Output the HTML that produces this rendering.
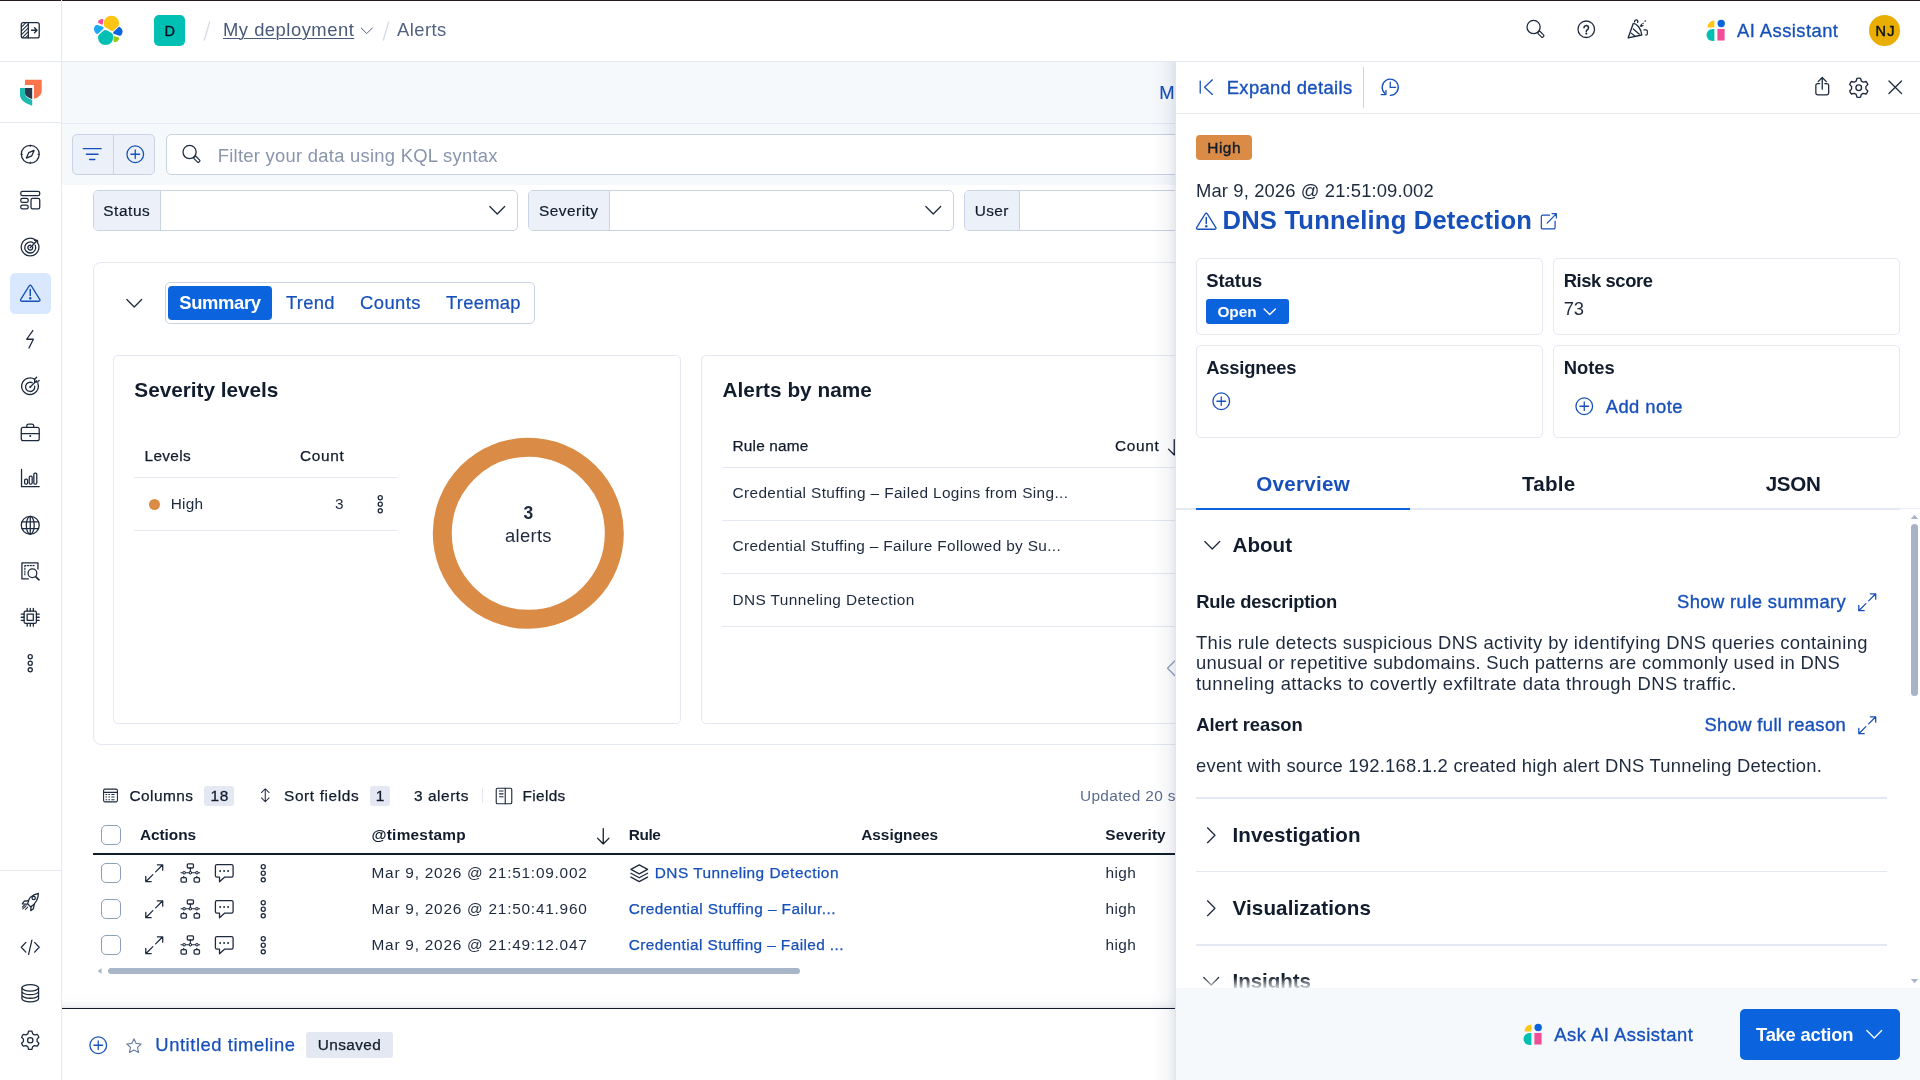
<!DOCTYPE html><html lang="en"><head><meta charset="utf-8"><title>Alerts - Elastic Security</title>
<style>
html,body{margin:0;padding:0}
body{width:1920px;height:1080px;overflow:hidden;position:relative;background:#fff;font-family:"Liberation Sans",sans-serif;-webkit-font-smoothing:antialiased}
#w{position:absolute;left:0;top:0;width:1920px;height:1080px;will-change:transform}
.b{position:absolute;box-sizing:border-box}
.t{position:absolute;white-space:nowrap;display:block}
.i{position:absolute;overflow:visible}
</style></head>
<body>
<div id="w">
<div class="b" style="left:62px;top:62px;width:1858px;height:123px;background:#f6f9fc;"></div>
<div class="b" style="left:62px;top:123px;width:1858px;height:1px;background:#e3e8f2;"></div>
<div class="b" style="left:0px;top:0px;width:1920px;height:61px;background:#fff;"></div>
<div class="b" style="left:0px;top:61px;width:1920px;height:1px;background:#e3e8f2;"></div>
<div class="b" style="left:0px;top:0px;width:1920px;height:1px;background:#271d1e;"></div>
<div class="b" style="left:0px;top:62px;width:61px;height:1018px;background:#fff;"></div>
<div class="b" style="left:61px;top:0px;width:1px;height:1080px;background:#e3e8f2;"></div>
<div class="b" style="left:0px;top:122px;width:61px;height:1px;background:#e3e8f2;"></div>
<div class="b" style="left:0px;top:870px;width:61px;height:1px;background:#e3e8f2;"></div>
<svg class="i" style="left:19.75px;top:19.75px;color:#1d2a3e;" width="20.5" height="20.5" viewBox="0 0 16 16" fill="none" stroke="currentColor" stroke-width="1" stroke-linecap="round" stroke-linejoin="round"><rect x="1" y="2" width="14" height="12" rx="1.5"></rect><path d="M6.5 2v12"></path><path d="M9 8h4M11.3 6l2 2-2 2"></path><path d="M1.2 5.5 4.6 2.1M1.2 8.5 6.3 3.4M1.2 11.5 6.3 6.4M1.8 13.8 6.3 9.3M4.3 13.9 6.3 11.9" stroke-width=".8"></path></svg>
<svg class="i" style="left:18px;top:78px" width="26" height="30" viewBox="18 78 26 30"><path fill="#fa744e" d="M25 79.800H41.700V90.500C41.700 95 38.500 97.400 33.900 99V85H25z"></path><path fill="#1dbab0" d="M20 88H25.200V93.500C25.200 96.500 28 98.600 32.200 99.900V105.800C25.500 103.300 20 100.200 20 95z"></path><path fill="#2b394f" d="M25 88H32.200V99.200C28 97.600 25 95.600 25 93z"></path></svg>
<div class="b" style="left:10px;top:273px;width:41px;height:41px;background:#d9e8ff;border-radius:5.5px;"></div>
<svg class="i" style="left:20.05px;top:143.75px;color:#1d2a3e;" width="20.5" height="20.5" viewBox="0 0 16 16" fill="none" stroke="currentColor" stroke-width="1" stroke-linecap="round" stroke-linejoin="round"><circle cx="8" cy="8" r="7"></circle><path d="M11 5 9.2 9.2 5 11l1.8-4.2z"></path><path d="M8 1v1M8 14v1M1 8h1M14 8h1" stroke-width=".8"></path></svg>
<svg class="i" style="left:20.05px;top:189.75px;color:#1d2a3e;" width="20.5" height="20.5" viewBox="0 0 16 16" fill="none" stroke="currentColor" stroke-width="1" stroke-linecap="round" stroke-linejoin="round"><rect x=".6" y="1" width="14.800" height="3.400" rx="1.300"></rect><rect x=".6" y="6.600" width="5.800" height="3" rx="1.300"></rect><rect x=".6" y="11.800" width="5.800" height="3" rx="1.300"></rect><rect x="8.600" y="6.600" width="6.800" height="8.200" rx="1.300"></rect></svg>
<svg class="i" style="left:20.05px;top:236.75px;color:#1d2a3e;" width="20.5" height="20.5" viewBox="0 0 16 16" fill="none" stroke="currentColor" stroke-width="1" stroke-linecap="round" stroke-linejoin="round"><path d="M12.300 2.600A6.900 6.900 0 1 0 14.300 5.400"></path><path d="M10.500 4.700A4.300 4.300 0 1 0 11.900 6.400"></path><path d="M8.600 6.500A1.900 1.900 0 1 0 9.800 7.600"></path><path d="M8 8.300l5.400-5.600M11.400 2.500l2.200.1.100 2.200" stroke-width="1.100"></path></svg>
<svg class="i" style="left:20.05px;top:283.15px;color:#1750ba;" width="20.5" height="20.5" viewBox="0 0 16 16" fill="none" stroke="currentColor" stroke-width="1" stroke-linecap="round" stroke-linejoin="round"><path d="M8.850 2.200 15.500 13c.35.600-.05 1.250-.75 1.250H1.250c-.7 0-1.100-.65-.75-1.250L7.150 2.200c.35-.6 1.350-.6 1.700 0z"></path><path d="M8 5v4.700" stroke-width="1.150"></path><circle cx="8" cy="11.900" r=".95" fill="currentColor" stroke="none"></circle></svg>
<svg class="i" style="left:20.05px;top:328.75px;color:#1d2a3e;" width="20.5" height="20.5" viewBox="0 0 16 16" fill="none" stroke="currentColor" stroke-width="1" stroke-linecap="round" stroke-linejoin="round"><path d="M10 1.2 5.2 8h5.2L7 14.8"></path></svg>
<svg class="i" style="left:20.05px;top:375.75px;color:#1d2a3e;" width="20.5" height="20.5" viewBox="0 0 16 16" fill="none" stroke="currentColor" stroke-width="1" stroke-linecap="round" stroke-linejoin="round"><path d="M11.5 2.6A6.5 6.5 0 1 0 14 6"></path><path d="M9.6 5.3A3.6 3.6 0 1 0 11.5 8"></path><circle cx="8" cy="8.6" r=".8" fill="currentColor" stroke="none"></circle><path d="M8 8.6l5-5M11.4 2.2v2.6H14M13 1l-1.6 1.6M15 3.4l-1.4 1.4" stroke-width="1"></path></svg>
<svg class="i" style="left:20.05px;top:421.75px;color:#1d2a3e;" width="20.5" height="20.5" viewBox="0 0 16 16" fill="none" stroke="currentColor" stroke-width="1" stroke-linecap="round" stroke-linejoin="round"><rect x="1" y="4.2" width="14" height="10.3" rx="1.5"></rect><path d="M5.3 4.2V3c0-.8.6-1.4 1.4-1.4h2.6c.8 0 1.4.6 1.4 1.4v1.2M1 9h14"></path><circle cx="8" cy="11" r=".8" fill="currentColor" stroke="none"></circle></svg>
<svg class="i" style="left:20.05px;top:467.75px;color:#1d2a3e;" width="20.5" height="20.5" viewBox="0 0 16 16" fill="none" stroke="currentColor" stroke-width="1" stroke-linecap="round" stroke-linejoin="round"><path d="M1.2 1v13.6H15"></path><rect x="3.6" y="8.6" width="2.3" height="4" rx=".9"></rect><rect x="7.2" y="6.4" width="2.3" height="6.2" rx=".9"></rect><rect x="10.8" y="4" width="2.3" height="8.6" rx=".9"></rect></svg>
<svg class="i" style="left:20.05px;top:514.75px;color:#1d2a3e;" width="20.5" height="20.5" viewBox="0 0 16 16" fill="none" stroke="currentColor" stroke-width="1" stroke-linecap="round" stroke-linejoin="round"><circle cx="8" cy="8" r="7"></circle><ellipse cx="8" cy="8" rx="3.1" ry="7"></ellipse><path d="M8 1v14M1.6 5.4h12.8M1.6 10.6h12.8"></path></svg>
<svg class="i" style="left:20.05px;top:560.75px;color:#1d2a3e;" width="20.5" height="20.5" viewBox="0 0 16 16" fill="none" stroke="currentColor" stroke-width="1" stroke-linecap="round" stroke-linejoin="round"><path d="M6.5 14H1.5V1.5h12.5v4.7"></path><circle cx="9.7" cy="9.6" r="3.4"></circle><path d="M12.2 12.2l2.6 2.6" stroke-width="1.3"></path><path d="M3.8 3.6h8.4M3.8 3.6v8" stroke-width=".9" stroke-dasharray=".9 1.2"></path></svg>
<svg class="i" style="left:20.05px;top:606.75px;color:#1d2a3e;" width="20.5" height="20.5" viewBox="0 0 16 16" fill="none" stroke="currentColor" stroke-width="1" stroke-linecap="round" stroke-linejoin="round"><rect x="3.2" y="3.2" width="9.6" height="9.6" rx="1.2"></rect><rect x="5.6" y="5.6" width="4.8" height="4.8"></rect><path d="M5.6 1v2.2M8 1v2.2M10.4 1v2.2M5.6 12.8V15M8 12.8V15M10.4 12.8V15M1 5.6h2.2M1 8h2.2M1 10.4h2.2M12.8 5.6H15M12.8 8H15M12.8 10.4H15"></path></svg>
<svg class="i" style="left:20.05px;top:652.75px;color:#1d2a3e;" width="20.5" height="20.5" viewBox="0 0 16 16" fill="none" stroke="currentColor" stroke-width="1" stroke-linecap="round" stroke-linejoin="round"><circle cx="8" cy="2.900" r="1.600"></circle><circle cx="8" cy="8" r="1.600"></circle><circle cx="8" cy="13.100" r="1.600"></circle></svg>
<svg class="i" style="left:20.05px;top:891.25px;color:#1d2a3e;" width="20.5" height="20.5" viewBox="0 0 16 16" fill="none" stroke="currentColor" stroke-width="1" stroke-linecap="round" stroke-linejoin="round"><path d="M6 10.2c.3-3.6 2.6-7.2 8.4-8.4-.2 5-2.8 8.600-6 10.600z"></path><circle cx="10.700" cy="5.500" r="1.300"></circle><path d="M6.300 7.600 3.200 8l-1.400 2 3.600.300M8.600 12.400l-.2 2.900 2-1.400.7-3.400"></path><path d="M4.800 11.400 2.200 14M6 12.600l-1.800 1.800M3.600 10.800l-1.800 1.800" stroke-width=".8"></path></svg>
<svg class="i" style="left:20.05px;top:937.25px;color:#1d2a3e;" width="20.5" height="20.5" viewBox="0 0 16 16" fill="none" stroke="currentColor" stroke-width="1" stroke-linecap="round" stroke-linejoin="round"><path d="M4.600 4.200 1 8l3.600 3.800M11.400 4.200 15 8l-3.600 3.800M9.300 2.500 6.700 13.500"></path></svg>
<svg class="i" style="left:20.05px;top:982.75px;color:#1d2a3e;" width="20.5" height="20.5" viewBox="0 0 16 16" fill="none" stroke="currentColor" stroke-width="1" stroke-linecap="round" stroke-linejoin="round"><ellipse cx="8" cy="3.800" rx="6.500" ry="2.500"></ellipse><path d="M1.500 3.800v8.400c0 1.400 2.900 2.500 6.500 2.500s6.500-1.100 6.500-2.500V3.800M1.500 6.600c0 1.400 2.900 2.500 6.500 2.500s6.500-1.100 6.500-2.500M1.500 9.400c0 1.400 2.900 2.500 6.500 2.500s6.500-1.100 6.500-2.500"></path></svg>
<svg class="i" style="left:20.05px;top:1029.75px;color:#1d2a3e;" width="20.5" height="20.5" viewBox="0 0 16 16" fill="none" stroke="currentColor" stroke-width="1" stroke-linecap="round" stroke-linejoin="round"><circle cx="8" cy="8" r="2.100"></circle><path d="M6.08 3.01L6.70 0.97A7.15 7.15 0 0 1 9.30 0.97L9.92 3.01A5.35 5.35 0 0 1 11.37 3.84L13.44 3.36A7.15 7.15 0 0 1 14.74 5.61L13.28 7.16A5.35 5.35 0 0 1 13.28 8.84L14.74 10.39A7.15 7.15 0 0 1 13.44 12.64L11.37 12.16A5.35 5.35 0 0 1 9.92 12.99L9.30 15.03A7.15 7.15 0 0 1 6.70 15.03L6.08 12.99A5.35 5.35 0 0 1 4.63 12.16L2.56 12.64A7.15 7.15 0 0 1 1.26 10.39L2.72 8.84A5.35 5.35 0 0 1 2.72 7.16L1.26 5.61A7.15 7.15 0 0 1 2.56 3.36L4.63 3.84A5.35 5.35 0 0 1 6.08 3.01Z"></path></svg>
<svg class="i" style="left:84px;top:8px" width="48" height="46" viewBox="0 0 768 736"><path fill="#fec514" d="M438 125C510 125 560 180 560 245C560 270 555 285 545 295L470 362C455 370 440 368 425 360L330 300C320 285 318 265 318 245C318 180 366 125 438 125Z"></path><path fill="#00bfb3" d="M340 350C355 350 365 355 380 362L450 405C462 420 465 445 465 470C465 540 415 590 345 590C275 590 225 540 225 470C225 455 228 440 235 430L310 365C320 355 330 350 340 350Z"></path><path fill="#1ba9f5" d="M200 272C215 270 225 272 240 278L305 300C312 310 315 320 310 330L225 410C215 418 200 415 190 405C170 385 160 360 160 340C160 305 175 280 200 272Z"></path><path fill="#0b64dd" d="M570 300C585 310 600 325 610 345C622 370 620 395 605 420C595 437 580 447 565 445L475 410C465 400 465 390 472 380L555 305C560 300 565 298 570 300Z"></path><path fill="#f04e98" d="M290 175C300 175 310 180 310 190L300 255C298 265 290 267 280 262L240 245C228 238 225 225 228 212C235 190 260 175 290 175Z"></path><path fill="#93c90e" d="M480 450L545 465C558 470 562 480 560 492C555 520 530 542 495 545C480 545 472 538 472 525L470 462C470 453 473 449 480 450Z"></path></svg>
<div class="b" style="left:154px;top:15px;width:31px;height:31px;background:#00bfb3;border-radius:5px;"></div>
<span class="t" style="left: 164.4px; top: 23.51px; font-size: 14.5px; line-height: 14.5px; color: rgb(7, 16, 31); -webkit-text-stroke: 0.35px rgb(7, 16, 31); letter-spacing: 0.031px;">D</span>
<svg class="i" style="left:200px;top:18px" width="14" height="26" viewBox="0 0 14 26"><path d="M9.800 3.500 4.200 22.500" stroke="#d3dae6" stroke-width="1.300"></path></svg>
<span class="t" style="left: 223px; top: 21.01px; font-size: 18.4px; line-height: 18.4px; color: rgb(72, 89, 122); text-decoration: underline 1px; text-underline-offset: 2px; letter-spacing: 0.504px;">My deployment</span>
<svg class="i" style="left:359.25px;top:22.55px;color:#48597a;" width="15.5" height="15.5" viewBox="0 0 16 16" fill="none" stroke="currentColor" stroke-width="1" stroke-linecap="round" stroke-linejoin="round"><path d="M2.200 5.100 8 10.900 13.800 5.100"></path></svg>
<svg class="i" style="left:379px;top:18px" width="14" height="26" viewBox="0 0 14 26"><path d="M9.800 3.500 4.200 22.500" stroke="#d3dae6" stroke-width="1.300"></path></svg>
<span class="t" style="left: 397px; top: 21.01px; font-size: 18.4px; line-height: 18.4px; color: rgb(81, 99, 129); letter-spacing: 0.452px;">Alerts</span>
<svg class="i" style="left:1524.75px;top:19.25px;color:#1d2a3e;" width="20.5" height="20.5" viewBox="0 0 16 16" fill="none" stroke="currentColor" stroke-width="1" stroke-linecap="round" stroke-linejoin="round"><circle cx="6.700" cy="6.300" r="5.150"></circle><rect x="-1.150" y="0" width="2.300" height="5.300" rx=".7" transform="translate(10.500 10.100) rotate(-45)" stroke-width=".95"></rect></svg>
<svg class="i" style="left:1575.95px;top:18.85px;color:#1d2a3e;" width="20.5" height="20.5" viewBox="0 0 16 16" fill="none" stroke="currentColor" stroke-width="1" stroke-linecap="round" stroke-linejoin="round"><circle cx="8" cy="8" r="6.450"></circle><path d="M6.250 6.800a1.750 1.750 0 1 1 2.750 1.450c-.6.400-.95.750-.95 1.350v.150" stroke-width="1.200"></path><circle cx="8.050" cy="11.400" r=".8" fill="currentColor" stroke="none"></circle></svg>
<svg class="i" style="left:1627.25px;top:18.75px;color:#1d2a3e;" width="21.5" height="21.5" viewBox="0 0 16 16" fill="none" stroke="currentColor" stroke-width="1" stroke-linecap="round" stroke-linejoin="round"><path d="M.9 14 4.650 3.300C7.200 3.300 10.600 7 11 11.900z"></path><path d="M4.700 7.400l4.500 3.900M3.100 10.500l2.700 2.200" stroke-width=".9"></path><path d="M5.700 2.100a1.200 1.200 0 1 1 2.200.4"></path><path d="M10 5.300 14.500.5" stroke-width=".9" stroke-dasharray="1.1 1.200" stroke-linecap="butt"></path><path d="M11.900 4.800 10.400 5.500l.4-1.600" stroke-width=".9"></path><path d="M12.600 8.100h1.700c.5 0 .8.300.8.800v2.200c0 .5-.3.800-.8.800h-.6" stroke-width=".9"></path></svg>
<svg class="i" style="left:1706.5px;top:19.7px" width="19" height="22" viewBox="0 0 19 22"><path fill="#fec514" d="M.5 7.400A6.900 6.900 0 0 1 7.400.5V7.400z"></path><path fill="#00bfb3" d="M7.400 8.900H5.500A6 6 0 0 0 5.500 20.900H7.400z"></path><circle cx="14.200" cy="3.500" r="3.700" fill="#0b64dd"></circle><rect x="10.400" y="8.900" width="7.200" height="11.600" fill="#f04e98"></rect></svg>
<span class="t" style="left: 1737px; top: 21.6px; font-size: 18.4px; line-height: 18.4px; color: rgb(23, 80, 186); -webkit-text-stroke: 0.3px rgb(23, 80, 186); letter-spacing: 0.444px;">AI Assistant</span>
<div class="b" style="left:1869.4px;top:15px;width:30.6px;height:30.6px;background:#eaae01;border-radius:16px;"></div>
<span class="t" style="left: 1875.4px; top: 23.51px; font-size: 14.5px; line-height: 14.5px; color: rgb(7, 16, 31); -webkit-text-stroke: 0.45px rgb(7, 16, 31); letter-spacing: 1.31px;">NJ</span>
<span class="t" style="left: 1159.3px; top: 83.51px; font-size: 18.4px; line-height: 18.4px; color: rgb(23, 80, 186); -webkit-text-stroke: 0.15px rgb(23, 80, 186);">Manage rules</span>
<div class="b" style="left:72px;top:134px;width:83px;height:41px;background:#ecf1f9;border:1px solid #cad3e2;border-radius:5px;"></div>
<div class="b" style="left:113px;top:135px;width:1px;height:39px;background:#cad3e2;"></div>
<svg class="i" style="left:82.05px;top:143.35px;color:#1750ba;stroke-width:1.150;" width="20.5" height="20.5" viewBox="0 0 16 16" fill="none" stroke="currentColor" stroke-width="1" stroke-linecap="round" stroke-linejoin="round"><path d="M1.100 4.400h13.800M3.500 8.700h9M6 12.900h4"></path></svg>
<svg class="i" style="left:124.85px;top:144.05px;color:#1750ba;" width="20.5" height="20.5" viewBox="0 0 16 16" fill="none" stroke="currentColor" stroke-width="1" stroke-linecap="round" stroke-linejoin="round"><circle cx="8" cy="8" r="6.5"></circle><path d="M8 4.6v6.8M4.6 8h6.8"></path></svg>
<div class="b" style="left:166px;top:134px;width:1100px;height:41px;background:#fff;border:1px solid #cad3e2;border-radius:5px;"></div>
<svg class="i" style="left:180.75px;top:144.25px;color:#1d2a3e;" width="20.5" height="20.5" viewBox="0 0 16 16" fill="none" stroke="currentColor" stroke-width="1" stroke-linecap="round" stroke-linejoin="round"><circle cx="6.700" cy="6.300" r="5.150"></circle><rect x="-1.150" y="0" width="2.300" height="5.300" rx=".7" transform="translate(10.500 10.100) rotate(-45)" stroke-width=".95"></rect></svg>
<span class="t" style="left: 217.7px; top: 147.3px; font-size: 18.4px; line-height: 18.4px; color: rgb(136, 149, 173); letter-spacing: 0.27px;">Filter your data using KQL syntax</span>
<div class="b" style="left:62px;top:185px;width:1858px;height:823px;background:#fff;"></div>
<div class="b" style="left:93px;top:190px;width:425px;height:41px;background:#fff;border:1px solid #cad3e2;border-radius:5px;"></div>
<div class="b" style="left:94px;top:191px;width:67px;height:39px;background:#ecf1f9;border-radius:4px 0 0 4px;border-right:1px solid #cad3e2;"></div>
<span class="t" style="left: 103.3px; top: 203.01px; font-size: 15.4px; line-height: 15.4px; color: rgb(17, 28, 44); -webkit-text-stroke: 0.2px rgb(17, 28, 44); letter-spacing: 0.556px;">Status</span>
<svg class="i" style="left:487.45px;top:200.25px;color:#1d2a3e;" width="20.5" height="20.5" viewBox="0 0 16 16" fill="none" stroke="currentColor" stroke-width="1" stroke-linecap="round" stroke-linejoin="round"><path d="M2.200 5.100 8 10.900 13.800 5.100"></path></svg>
<div class="b" style="left:528px;top:190px;width:425.5px;height:41px;background:#fff;border:1px solid #cad3e2;border-radius:5px;"></div>
<div class="b" style="left:529px;top:191px;width:81px;height:39px;background:#ecf1f9;border-radius:4px 0 0 4px;border-right:1px solid #cad3e2;"></div>
<span class="t" style="left: 539px; top: 203.01px; font-size: 15.4px; line-height: 15.4px; color: rgb(17, 28, 44); -webkit-text-stroke: 0.2px rgb(17, 28, 44); letter-spacing: 0.492px;">Severity</span>
<svg class="i" style="left:922.95px;top:200.25px;color:#1d2a3e;" width="20.5" height="20.5" viewBox="0 0 16 16" fill="none" stroke="currentColor" stroke-width="1" stroke-linecap="round" stroke-linejoin="round"><path d="M2.200 5.100 8 10.900 13.800 5.100"></path></svg>
<div class="b" style="left:964px;top:190px;width:425px;height:41px;background:#fff;border:1px solid #cad3e2;border-radius:5px;"></div>
<div class="b" style="left:965px;top:191px;width:55px;height:39px;background:#ecf1f9;border-radius:4px 0 0 4px;border-right:1px solid #cad3e2;"></div>
<span class="t" style="left: 974.7px; top: 203.01px; font-size: 15.4px; line-height: 15.4px; color: rgb(17, 28, 44); -webkit-text-stroke: 0.2px rgb(17, 28, 44); letter-spacing: 0.429px;">User</span>
<svg class="i" style="left:1358.45px;top:200.25px;color:#1d2a3e;" width="20.5" height="20.5" viewBox="0 0 16 16" fill="none" stroke="currentColor" stroke-width="1" stroke-linecap="round" stroke-linejoin="round"><path d="M2.200 5.100 8 10.900 13.800 5.100"></path></svg>
<div class="b" style="left:93px;top:262px;width:1400px;height:482.5px;background:#fff;border:1px solid #e3e8f2;border-radius:8px;"></div>
<svg class="i" style="left:124.05px;top:293.25px;color:#1d2a3e;" width="20.5" height="20.5" viewBox="0 0 16 16" fill="none" stroke="currentColor" stroke-width="1" stroke-linecap="round" stroke-linejoin="round"><path d="M2.200 5.100 8 10.900 13.800 5.100"></path></svg>
<div class="b" style="left:165px;top:282px;width:370px;height:42px;background:#fff;border:1px solid #cad3e2;border-radius:5px;"></div>
<div class="b" style="left:168px;top:286px;width:104px;height:34px;background:#0b64dd;border-radius:4px;"></div>
<span class="t" style="left: 179.3px; top: 294.3px; font-size: 18.4px; line-height: 18.4px; color: rgb(255, 255, 255); font-weight: 700; letter-spacing: -0.358px;">Summary</span>
<span class="t" style="left: 286px; top: 294.3px; font-size: 18.4px; line-height: 18.4px; color: rgb(23, 80, 186); -webkit-text-stroke: 0.2px rgb(23, 80, 186); letter-spacing: 0.298px;">Trend</span>
<span class="t" style="left: 360px; top: 294.3px; font-size: 18.4px; line-height: 18.4px; color: rgb(23, 80, 186); -webkit-text-stroke: 0.2px rgb(23, 80, 186); letter-spacing: 0.44px;">Counts</span>
<span class="t" style="left: 446px; top: 294.3px; font-size: 18.4px; line-height: 18.4px; color: rgb(23, 80, 186); -webkit-text-stroke: 0.2px rgb(23, 80, 186); letter-spacing: 0.274px;">Treemap</span>
<div class="b" style="left:113px;top:355px;width:568px;height:368.5px;background:#fff;border:1px solid #e3e8f2;border-radius:5px;"></div>
<span class="t" style="left: 134.3px; top: 380.01px; font-size: 20.8px; line-height: 20.8px; color: rgb(17, 28, 44); font-weight: 700; letter-spacing: -0.038px;">Severity levels</span>
<span class="t" style="left: 144.5px; top: 447.61px; font-size: 15.4px; line-height: 15.4px; color: rgb(17, 28, 44); -webkit-text-stroke: 0.25px rgb(17, 28, 44); letter-spacing: 0.345px;">Levels</span>
<span class="t" style="left: 300px; top: 447.61px; font-size: 15.4px; line-height: 15.4px; color: rgb(17, 28, 44); -webkit-text-stroke: 0.25px rgb(17, 28, 44); letter-spacing: 0.649px;">Count</span>
<div class="b" style="left:134px;top:477px;width:263px;height:1px;background:#e3e8f2;"></div>
<div class="b" style="left:149px;top:499px;width:10.5px;height:10.5px;background:#da8b45;border-radius:6px;"></div>
<span class="t" style="left: 170.7px; top: 496.01px; font-size: 15.4px; line-height: 15.4px; color: rgb(29, 42, 62); letter-spacing: 0.212px;">High</span>
<span class="t" style="left: 335px; top: 496.01px; font-size: 15.4px; line-height: 15.4px; color: rgb(29, 42, 62);">3</span>
<svg class="i" style="left:370.35px;top:494.0px;color:#1d2a3e;" width="20.5" height="20.5" viewBox="0 0 16 16" fill="none" stroke="currentColor" stroke-width="1" stroke-linecap="round" stroke-linejoin="round"><circle cx="8" cy="2.900" r="1.600"></circle><circle cx="8" cy="8" r="1.600"></circle><circle cx="8" cy="13.100" r="1.600"></circle></svg>
<div class="b" style="left:134px;top:530px;width:263px;height:1px;background:#e3e8f2;"></div>
<svg class="i" style="left:428px;top:433px" width="200" height="200" viewBox="428 433 200 200"><circle cx="528.300" cy="533.300" r="86" fill="none" stroke="#da8b45" stroke-width="19"></circle></svg>
<span class="t" style="left: 523.4px; top: 504.5px; font-size: 17.5px; line-height: 17.5px; color: rgb(29, 42, 62); font-weight: 700;">3</span>
<span class="t" style="left: 505px; top: 527.01px; font-size: 18.4px; line-height: 18.4px; color: rgb(29, 42, 62); letter-spacing: 0.312px;">alerts</span>
<div class="b" style="left:701px;top:355px;width:800px;height:368.5px;background:#fff;border:1px solid #e3e8f2;border-radius:5px;"></div>
<span class="t" style="left: 722.5px; top: 380.01px; font-size: 20.8px; line-height: 20.8px; color: rgb(17, 28, 44); font-weight: 700; letter-spacing: 0.022px;">Alerts by name</span>
<span class="t" style="left: 732.5px; top: 437.61px; font-size: 15.4px; line-height: 15.4px; color: rgb(17, 28, 44); -webkit-text-stroke: 0.25px rgb(17, 28, 44); letter-spacing: 0.184px;">Rule name</span>
<span class="t" style="left: 1115px; top: 437.61px; font-size: 15.4px; line-height: 15.4px; color: rgb(17, 28, 44); -webkit-text-stroke: 0.25px rgb(17, 28, 44); letter-spacing: 0.649px;">Count</span>
<svg class="i" style="left:1163.75px;top:436.75px;color:#111c2c;" width="20.5" height="20.5" viewBox="0 0 16 16" fill="none" stroke="currentColor" stroke-width="1" stroke-linecap="round" stroke-linejoin="round"><path d="M8 2v12M3.500 9.500 8 14l4.500-4.500"></path></svg>
<div class="b" style="left:722px;top:467px;width:778px;height:1px;background:#e3e8f2;"></div>
<span class="t" style="left: 732.5px; top: 485.01px; font-size: 15.4px; line-height: 15.4px; color: rgb(29, 42, 62); letter-spacing: 0.373px;">Credential Stuffing – Failed Logins from Sing...</span>
<div class="b" style="left:722px;top:520px;width:778px;height:1px;background:#e3e8f2;"></div>
<span class="t" style="left: 732.5px; top: 538.26px; font-size: 15.4px; line-height: 15.4px; color: rgb(29, 42, 62); letter-spacing: 0.335px;">Credential Stuffing – Failure Followed by Su...</span>
<div class="b" style="left:722px;top:573px;width:778px;height:1px;background:#e3e8f2;"></div>
<span class="t" style="left: 732.5px; top: 592.01px; font-size: 15.4px; line-height: 15.4px; color: rgb(29, 42, 62); letter-spacing: 0.408px;">DNS Tunneling Detection</span>
<div class="b" style="left:722px;top:626px;width:778px;height:1px;background:#e3e8f2;"></div>
<svg class="i" style="left:1161.25px;top:658.05px;color:#8e9fbc;" width="20.5" height="20.5" viewBox="0 0 16 16" fill="none" stroke="currentColor" stroke-width="1" stroke-linecap="round" stroke-linejoin="round"><path d="M10.900 2.200 5.100 8 10.900 13.800"></path></svg>
<svg class="i" style="left:102.4px;top:787.3px;color:#1d2a3e;" width="17" height="17" viewBox="0 0 16 16" fill="none" stroke="currentColor" stroke-width="1" stroke-linecap="round" stroke-linejoin="round"><rect x="1.500" y="2" width="13" height="12" rx="1.200"></rect><path d="M1.500 5.100h13" stroke-width="1.100"></path><path d="M3.300 7.100h1.500M6 7.100h1.500M8.800 7.100h3M3.300 9.500h1.500M6 9.500h1.500M8.800 9.500h3M3.300 11.900h1.500M6 11.900h1.500M8.800 11.900h3" stroke-width=".95" stroke-linecap="butt"></path></svg>
<span class="t" style="left: 129.5px; top: 788.01px; font-size: 15.4px; line-height: 15.4px; color: rgb(17, 28, 44); -webkit-text-stroke: 0.25px rgb(17, 28, 44); letter-spacing: 0.456px;">Columns</span>
<div class="b" style="left:204px;top:786px;width:30px;height:20px;background:#e3e8f2;border-radius:3px;"></div>
<span class="t" style="left: 210.5px; top: 788.01px; font-size: 15.4px; line-height: 15.4px; color: rgb(17, 28, 44); -webkit-text-stroke: 0.3px rgb(17, 28, 44); letter-spacing: 0.583px;">18</span>
<svg class="i" style="left:257.25px;top:787.45px;color:#1d2a3e;" width="16.5" height="16.5" viewBox="0 0 16 16" fill="none" stroke="currentColor" stroke-width="1" stroke-linecap="round" stroke-linejoin="round"><path d="M8 2v12M4.300 5.400 8 1.700l3.700 3.700M4.300 10.600 8 14.300l3.700-3.700"></path></svg>
<span class="t" style="left: 284px; top: 788.01px; font-size: 15.4px; line-height: 15.4px; color: rgb(17, 28, 44); -webkit-text-stroke: 0.25px rgb(17, 28, 44); letter-spacing: 0.625px;">Sort fields</span>
<div class="b" style="left:370px;top:786px;width:20px;height:20px;background:#e3e8f2;border-radius:3px;"></div>
<span class="t" style="left: 375.8px; top: 788.01px; font-size: 15.4px; line-height: 15.4px; color: rgb(17, 28, 44); -webkit-text-stroke: 0.3px rgb(17, 28, 44);">1</span>
<span class="t" style="left: 414px; top: 788.01px; font-size: 15.4px; line-height: 15.4px; color: rgb(17, 28, 44); -webkit-text-stroke: 0.25px rgb(17, 28, 44); letter-spacing: 0.562px;">3 alerts</span>
<div class="b" style="left:482px;top:788px;width:1px;height:15px;background:#e3e8f2;"></div>
<svg class="i" style="left:494.8px;top:786.8px;color:#1d2a3e;" width="18" height="18" viewBox="0 0 16 16" fill="none" stroke="currentColor" stroke-width="1" stroke-linecap="round" stroke-linejoin="round"><rect x="1.100" y="1.100" width="13.800" height="13.800" rx="1.200"></rect><path d="M9.100 1.100v13.800"></path><path d="M3.900 3.600h3.300M3.900 6.100h3.300M3.900 8.600h3.300" stroke-width=".95"></path></svg>
<span class="t" style="left: 522.5px; top: 788.01px; font-size: 15.4px; line-height: 15.4px; color: rgb(17, 28, 44); -webkit-text-stroke: 0.25px rgb(17, 28, 44); letter-spacing: 0.352px;">Fields</span>
<span class="t" style="left: 1080px; top: 788.01px; font-size: 15.4px; line-height: 15.4px; color: rgb(90, 109, 140); letter-spacing: 0.35px;">Updated 20 seconds ago</span>
<div class="b" style="left:101px;top:825px;width:20px;height:20px;background:#fff;border:1px solid #8e9fbc;border-radius:5px;"></div>
<span class="t" style="left: 140px; top: 827.26px; font-size: 15.4px; line-height: 15.4px; color: rgb(17, 28, 44); font-weight: 700; letter-spacing: -0.067px;">Actions</span>
<span class="t" style="left: 371.5px; top: 827.26px; font-size: 15.4px; line-height: 15.4px; color: rgb(17, 28, 44); font-weight: 700; letter-spacing: 0.244px;">@timestamp</span>
<svg class="i" style="left:593.35px;top:825.75px;color:#111c2c;" width="20.5" height="20.5" viewBox="0 0 16 16" fill="none" stroke="currentColor" stroke-width="1" stroke-linecap="round" stroke-linejoin="round"><path d="M8 2v12M3.500 9.500 8 14l4.500-4.500"></path></svg>
<span class="t" style="left: 628.7px; top: 827.26px; font-size: 15.4px; line-height: 15.4px; color: rgb(17, 28, 44); font-weight: 700; letter-spacing: -0.388px;">Rule</span>
<span class="t" style="left: 861.2px; top: 827.26px; font-size: 15.4px; line-height: 15.4px; color: rgb(17, 28, 44); font-weight: 700; letter-spacing: 0px;">Assignees</span>
<span class="t" style="left: 1105.3px; top: 827.26px; font-size: 15.4px; line-height: 15.4px; color: rgb(17, 28, 44); font-weight: 700; letter-spacing: 0.066px;">Severity</span>
<div class="b" style="left:93px;top:853px;width:1407px;height:2px;background:#111c2c;"></div>
<div class="b" style="left:101px;top:862.5px;width:20px;height:20px;background:#fff;border:1px solid #8e9fbc;border-radius:5px;"></div>
<svg class="i" style="left:143.95px;top:862.95px;color:#1d2a3e;" width="20.5" height="20.5" viewBox="0 0 16 16" fill="none" stroke="currentColor" stroke-width="1" stroke-linecap="round" stroke-linejoin="round"><path d="M10.400 1.400h4.200v4.200M14.400 1.600 9.100 6.900M5.600 14.600H1.400v-4.200M1.600 14.400l5.300-5.300"></path></svg>
<svg class="i" style="left:180.35px;top:862.65px;color:#1d2a3e;" width="20.5" height="20.5" viewBox="0 0 16 16" fill="none" stroke="currentColor" stroke-width="1" stroke-linecap="round" stroke-linejoin="round"><rect x="5.700" y=".6" width="4.800" height="3.300" rx=".8"></rect><rect x=".8" y="11.400" width="4.200" height="3.500" rx=".8"></rect><rect x="11" y="11.400" width="4.200" height="3.500" rx=".8"></rect><path d="M8.100 3.900v2.800M.8 7.600h14.500M2.900 10.400v1M13.100 10.400v1" stroke-width=".9"></path><circle cx="3.200" cy="7.600" r=".95" fill="#fff" stroke-width=".8"></circle><circle cx="8.100" cy="7.600" r=".95" fill="#fff" stroke-width=".8"></circle><circle cx="13.200" cy="7.600" r=".95" fill="#fff" stroke-width=".8"></circle></svg>
<svg class="i" style="left:214.05px;top:862.85px;color:#1d2a3e;" width="20.5" height="20.5" viewBox="0 0 16 16" fill="none" stroke="currentColor" stroke-width="1" stroke-linecap="round" stroke-linejoin="round"><path d="M2.300 1.300h11.400c.7 0 1.200.5 1.200 1.200v7.300c0 .7-.5 1.200-1.200 1.200H8.400l-4.100 3.600V11H2.300c-.7 0-1.200-.5-1.200-1.200V2.500c0-.7.500-1.200 1.200-1.200z"></path><circle cx="4.800" cy="6.200" r=".75" fill="currentColor" stroke="none"></circle><circle cx="7.900" cy="6.200" r=".75" fill="currentColor" stroke="none"></circle><circle cx="11" cy="6.200" r=".75" fill="currentColor" stroke="none"></circle></svg>
<svg class="i" style="left:253.05px;top:862.95px;color:#1d2a3e;" width="20.5" height="20.5" viewBox="0 0 16 16" fill="none" stroke="currentColor" stroke-width="1" stroke-linecap="round" stroke-linejoin="round"><circle cx="8" cy="2.900" r="1.600"></circle><circle cx="8" cy="8" r="1.600"></circle><circle cx="8" cy="13.100" r="1.600"></circle></svg>
<span class="t" style="left: 371.5px; top: 865.01px; font-size: 15.4px; line-height: 15.4px; color: rgb(29, 42, 62); letter-spacing: 0.766px;">Mar 9, 2026 @ 21:51:09.002</span>
<span class="t" style="left: 1105.5px; top: 865.01px; font-size: 15.4px; line-height: 15.4px; color: rgb(29, 42, 62); letter-spacing: 0.369px;">high</span>
<div class="b" style="left:101px;top:898.5px;width:20px;height:20px;background:#fff;border:1px solid #8e9fbc;border-radius:5px;"></div>
<svg class="i" style="left:143.95px;top:898.95px;color:#1d2a3e;" width="20.5" height="20.5" viewBox="0 0 16 16" fill="none" stroke="currentColor" stroke-width="1" stroke-linecap="round" stroke-linejoin="round"><path d="M10.400 1.400h4.200v4.200M14.400 1.600 9.100 6.900M5.600 14.600H1.400v-4.200M1.600 14.400l5.300-5.300"></path></svg>
<svg class="i" style="left:180.35px;top:898.65px;color:#1d2a3e;" width="20.5" height="20.5" viewBox="0 0 16 16" fill="none" stroke="currentColor" stroke-width="1" stroke-linecap="round" stroke-linejoin="round"><rect x="5.700" y=".6" width="4.800" height="3.300" rx=".8"></rect><rect x=".8" y="11.400" width="4.200" height="3.500" rx=".8"></rect><rect x="11" y="11.400" width="4.200" height="3.500" rx=".8"></rect><path d="M8.100 3.900v2.800M.8 7.600h14.500M2.900 10.400v1M13.100 10.400v1" stroke-width=".9"></path><circle cx="3.200" cy="7.600" r=".95" fill="#fff" stroke-width=".8"></circle><circle cx="8.100" cy="7.600" r=".95" fill="#fff" stroke-width=".8"></circle><circle cx="13.200" cy="7.600" r=".95" fill="#fff" stroke-width=".8"></circle></svg>
<svg class="i" style="left:214.05px;top:898.85px;color:#1d2a3e;" width="20.5" height="20.5" viewBox="0 0 16 16" fill="none" stroke="currentColor" stroke-width="1" stroke-linecap="round" stroke-linejoin="round"><path d="M2.300 1.300h11.400c.7 0 1.200.5 1.200 1.200v7.300c0 .7-.5 1.200-1.200 1.200H8.400l-4.100 3.600V11H2.300c-.7 0-1.200-.5-1.200-1.200V2.500c0-.7.500-1.200 1.200-1.200z"></path><circle cx="4.800" cy="6.200" r=".75" fill="currentColor" stroke="none"></circle><circle cx="7.900" cy="6.200" r=".75" fill="currentColor" stroke="none"></circle><circle cx="11" cy="6.200" r=".75" fill="currentColor" stroke="none"></circle></svg>
<svg class="i" style="left:253.05px;top:898.95px;color:#1d2a3e;" width="20.5" height="20.5" viewBox="0 0 16 16" fill="none" stroke="currentColor" stroke-width="1" stroke-linecap="round" stroke-linejoin="round"><circle cx="8" cy="2.900" r="1.600"></circle><circle cx="8" cy="8" r="1.600"></circle><circle cx="8" cy="13.100" r="1.600"></circle></svg>
<span class="t" style="left: 371.5px; top: 901.01px; font-size: 15.4px; line-height: 15.4px; color: rgb(29, 42, 62); letter-spacing: 0.766px;">Mar 9, 2026 @ 21:50:41.960</span>
<span class="t" style="left: 1105.5px; top: 901.01px; font-size: 15.4px; line-height: 15.4px; color: rgb(29, 42, 62); letter-spacing: 0.369px;">high</span>
<div class="b" style="left:101px;top:934.5px;width:20px;height:20px;background:#fff;border:1px solid #8e9fbc;border-radius:5px;"></div>
<svg class="i" style="left:143.95px;top:934.95px;color:#1d2a3e;" width="20.5" height="20.5" viewBox="0 0 16 16" fill="none" stroke="currentColor" stroke-width="1" stroke-linecap="round" stroke-linejoin="round"><path d="M10.400 1.400h4.200v4.200M14.400 1.600 9.100 6.900M5.600 14.600H1.400v-4.200M1.600 14.400l5.300-5.300"></path></svg>
<svg class="i" style="left:180.35px;top:934.65px;color:#1d2a3e;" width="20.5" height="20.5" viewBox="0 0 16 16" fill="none" stroke="currentColor" stroke-width="1" stroke-linecap="round" stroke-linejoin="round"><rect x="5.700" y=".6" width="4.800" height="3.300" rx=".8"></rect><rect x=".8" y="11.400" width="4.200" height="3.500" rx=".8"></rect><rect x="11" y="11.400" width="4.200" height="3.500" rx=".8"></rect><path d="M8.100 3.900v2.800M.8 7.600h14.500M2.900 10.400v1M13.100 10.400v1" stroke-width=".9"></path><circle cx="3.200" cy="7.600" r=".95" fill="#fff" stroke-width=".8"></circle><circle cx="8.100" cy="7.600" r=".95" fill="#fff" stroke-width=".8"></circle><circle cx="13.200" cy="7.600" r=".95" fill="#fff" stroke-width=".8"></circle></svg>
<svg class="i" style="left:214.05px;top:934.85px;color:#1d2a3e;" width="20.5" height="20.5" viewBox="0 0 16 16" fill="none" stroke="currentColor" stroke-width="1" stroke-linecap="round" stroke-linejoin="round"><path d="M2.300 1.300h11.400c.7 0 1.200.5 1.200 1.200v7.300c0 .7-.5 1.200-1.200 1.200H8.400l-4.100 3.600V11H2.300c-.7 0-1.200-.5-1.200-1.200V2.500c0-.7.500-1.200 1.200-1.200z"></path><circle cx="4.800" cy="6.200" r=".75" fill="currentColor" stroke="none"></circle><circle cx="7.900" cy="6.200" r=".75" fill="currentColor" stroke="none"></circle><circle cx="11" cy="6.200" r=".75" fill="currentColor" stroke="none"></circle></svg>
<svg class="i" style="left:253.05px;top:934.95px;color:#1d2a3e;" width="20.5" height="20.5" viewBox="0 0 16 16" fill="none" stroke="currentColor" stroke-width="1" stroke-linecap="round" stroke-linejoin="round"><circle cx="8" cy="2.900" r="1.600"></circle><circle cx="8" cy="8" r="1.600"></circle><circle cx="8" cy="13.100" r="1.600"></circle></svg>
<span class="t" style="left: 371.5px; top: 937.01px; font-size: 15.4px; line-height: 15.4px; color: rgb(29, 42, 62); letter-spacing: 0.766px;">Mar 9, 2026 @ 21:49:12.047</span>
<span class="t" style="left: 1105.5px; top: 937.01px; font-size: 15.4px; line-height: 15.4px; color: rgb(29, 42, 62); letter-spacing: 0.369px;">high</span>
<svg class="i" style="left:628.95px;top:863.15px;color:#1d2a3e;" width="20.5" height="20.5" viewBox="0 0 16 16" fill="none" stroke="currentColor" stroke-width="1" stroke-linecap="round" stroke-linejoin="round"><path d="M8 1.500 14.500 5 8 8.500 1.500 5z"></path><path d="M1.500 8 8 11.500 14.500 8M1.500 11 8 14.500 14.500 11"></path></svg>
<span class="t" style="left: 654.7px; top: 865.01px; font-size: 15.4px; line-height: 15.4px; color: rgb(23, 80, 186); -webkit-text-stroke: 0.25px rgb(23, 80, 186); letter-spacing: 0.497px;">DNS Tunneling Detection</span>
<span class="t" style="left: 628.7px; top: 901.01px; font-size: 15.4px; line-height: 15.4px; color: rgb(23, 80, 186); -webkit-text-stroke: 0.25px rgb(23, 80, 186); letter-spacing: 0.429px;">Credential Stuffing – Failur...</span>
<span class="t" style="left: 628.7px; top: 937.01px; font-size: 15.4px; line-height: 15.4px; color: rgb(23, 80, 186); -webkit-text-stroke: 0.25px rgb(23, 80, 186); letter-spacing: 0.397px;">Credential Stuffing – Failed ...</span>
<svg class="i" style="left:94.3px;top:964.5px;color:#a9b5c9;" width="12" height="12" viewBox="0 0 16 16" fill="none" stroke="currentColor" stroke-width="1" stroke-linecap="round" stroke-linejoin="round"><path d="M10 4v8L5 8z" fill="currentColor" stroke="none"></path></svg>
<div class="b" style="left:108px;top:967.5px;width:692px;height:6.5px;background:#a9b5c9;border-radius:4px;"></div>
<div class="b" style="left:62px;top:1009px;width:1858px;height:71px;background:#fff;"></div>
<div class="b" style="left:62px;top:994px;width:1858px;height:14px;background:linear-gradient(rgba(40,55,100,0),rgba(40,55,100,.012) 45%,rgba(40,55,100,.04) 80%,rgba(40,55,100,.11))"></div>
<div class="b" style="left:62px;top:1008px;width:1858px;height:1px;background:#111c2c;"></div>
<svg class="i" style="left:87.95px;top:1034.75px;color:#1750ba;" width="20.5" height="20.5" viewBox="0 0 16 16" fill="none" stroke="currentColor" stroke-width="1" stroke-linecap="round" stroke-linejoin="round"><circle cx="8" cy="8" r="6.5"></circle><path d="M8 4.6v6.8M4.6 8h6.8"></path></svg>
<svg class="i" style="left:125.3px;top:1036.5px;color:#6a7fa0;" width="18" height="18" viewBox="0 0 16 16" fill="none" stroke="currentColor" stroke-width="1" stroke-linecap="round" stroke-linejoin="round"><path d="M8 1.600l1.900 4.100 4.500.5-3.300 3.100.9 4.400L8 11.500l-4 2.200.9-4.400L1.600 6.200l4.500-.5z"></path></svg>
<span class="t" style="left: 155.3px; top: 1036.3px; font-size: 18.4px; line-height: 18.4px; color: rgb(23, 80, 186); -webkit-text-stroke: 0.25px rgb(23, 80, 186); letter-spacing: 0.555px;">Untitled timeline</span>
<div class="b" style="left:306px;top:1032px;width:87px;height:26px;background:#e3e8f2;border-radius:3px;"></div>
<span class="t" style="left: 317.7px; top: 1037.2px; font-size: 15.4px; line-height: 15.4px; color: rgb(17, 28, 44); -webkit-text-stroke: 0.25px rgb(17, 28, 44); letter-spacing: 0.392px;">Unsaved</span>
<div class="b" style="left:1151px;top:62px;width:24px;height:1018px;background:linear-gradient(90deg,rgba(30,45,100,0),rgba(30,45,100,.015) 35%,rgba(30,45,100,.045) 70%,rgba(30,45,100,.10))"></div>
<div class="b" style="left:1175px;top:62px;width:745px;height:1018px;background:#fff;border-left:1px solid #dde4f3;"></div>
<div class="b" style="left:1176px;top:113px;width:744px;height:1px;background:#e3e8f2;"></div>
<svg class="i" style="left:1196.25px;top:77.25px;color:#1750ba;" width="20.5" height="20.5" viewBox="0 0 16 16" fill="none" stroke="currentColor" stroke-width="1" stroke-linecap="round" stroke-linejoin="round"><path d="M3.300 3.200v9.300M12.800 2.200 6.700 7.950l6.100 5.650"></path></svg>
<span class="t" style="left: 1226.7px; top: 79.01px; font-size: 18.4px; line-height: 18.4px; color: rgb(23, 80, 186); -webkit-text-stroke: 0.35px rgb(23, 80, 186); letter-spacing: 0.366px;">Expand details</span>
<div class="b" style="left:1363px;top:67px;width:1px;height:41px;background:#cad3e2;"></div>
<svg class="i" style="left:1379.95px;top:76.85px;color:#1750ba;" width="20.5" height="20.5" viewBox="0 0 16 16" fill="none" stroke="currentColor" stroke-width="1" stroke-linecap="round" stroke-linejoin="round"><path d="M3.900 12.800A6.300 6.300 0 1 1 8 14.300"></path><path d="M.9 13.700H4.650V10.450"></path><path d="M8 4.100V8.100H12.200"></path></svg>
<svg class="i" style="left:1812.35px;top:76.35px;color:#1d2a3e;" width="20.5" height="20.5" viewBox="0 0 16 16" fill="none" stroke="currentColor" stroke-width="1" stroke-linecap="round" stroke-linejoin="round"><path d="M6 5.900H4.500a1.500 1.500 0 0 0-1.500 1.500v5.800a1.500 1.500 0 0 0 1.500 1.500h7a1.500 1.500 0 0 0 1.500-1.500V7.400a1.500 1.500 0 0 0-1.500-1.500H10"></path><path d="M8 10.300V1.300M4.800 4.400 8 1.200l3.200 3.200"></path></svg>
<svg class="i" style="left:1848.45px;top:76.65px;color:#1d2a3e;" width="21.5" height="21.5" viewBox="0 0 16 16" fill="none" stroke="currentColor" stroke-width="1" stroke-linecap="round" stroke-linejoin="round"><circle cx="8" cy="8" r="2.100"></circle><path d="M6.08 3.01L6.70 0.97A7.15 7.15 0 0 1 9.30 0.97L9.92 3.01A5.35 5.35 0 0 1 11.37 3.84L13.44 3.36A7.15 7.15 0 0 1 14.74 5.61L13.28 7.16A5.35 5.35 0 0 1 13.28 8.84L14.74 10.39A7.15 7.15 0 0 1 13.44 12.64L11.37 12.16A5.35 5.35 0 0 1 9.92 12.99L9.30 15.03A7.15 7.15 0 0 1 6.70 15.03L6.08 12.99A5.35 5.35 0 0 1 4.63 12.16L2.56 12.64A7.15 7.15 0 0 1 1.26 10.39L2.72 8.84A5.35 5.35 0 0 1 2.72 7.16L1.26 5.61A7.15 7.15 0 0 1 2.56 3.36L4.63 3.84A5.35 5.35 0 0 1 6.08 3.01Z"></path></svg>
<svg class="i" style="left:1885.05px;top:76.95px;color:#1d2a3e;" width="20.5" height="20.5" viewBox="0 0 16 16" fill="none" stroke="currentColor" stroke-width="1" stroke-linecap="round" stroke-linejoin="round"><path d="M3.100 3.100l9.800 9.800M12.900 3.100 3.100 12.900"></path></svg>
<div class="b" style="left:1196px;top:135px;width:56px;height:25px;background:#da8b45;border-radius:4px;"></div>
<span class="t" style="left: 1207.3px; top: 140.01px; font-size: 15.4px; line-height: 15.4px; color: rgb(17, 28, 44); -webkit-text-stroke: 0.35px rgb(17, 28, 44); letter-spacing: 0.498px;">High</span>
<span class="t" style="left: 1196px; top: 182.01px; font-size: 18.4px; line-height: 18.4px; color: rgb(29, 42, 62); letter-spacing: 0.129px;">Mar 9, 2026 @ 21:51:09.002</span>
<svg class="i" style="left:1195.75px;top:210.55px;color:#1750ba;" width="20.5" height="20.5" viewBox="0 0 16 16" fill="none" stroke="currentColor" stroke-width="1" stroke-linecap="round" stroke-linejoin="round"><path d="M8.850 2.200 15.500 13c.35.600-.05 1.250-.75 1.250H1.250c-.7 0-1.100-.65-.75-1.250L7.150 2.200c.35-.6 1.350-.6 1.700 0z"></path><path d="M8 5v4.700" stroke-width="1.150"></path><circle cx="8" cy="11.900" r=".95" fill="currentColor" stroke="none"></circle></svg>
<span class="t" style="left: 1222.5px; top: 208px; font-size: 25.6px; line-height: 25.6px; color: rgb(23, 80, 186); font-weight: 700; letter-spacing: 0.19px;">DNS Tunneling Detection</span>
<svg class="i" style="left:1539.05px;top:212.15px;color:#1750ba;" width="19.5" height="19.5" viewBox="0 0 16 16" fill="none" stroke="currentColor" stroke-width="1" stroke-linecap="round" stroke-linejoin="round"><path d="M8.700 2.600H3.100a1.200 1.200 0 0 0-1.200 1.200v8.900a1.200 1.200 0 0 0 1.200 1.200h8.900a1.200 1.200 0 0 0 1.200-1.200V7.500"></path><path d="M10.800 1.400h3.400V5M14.100 1.500 6.700 9.100"></path></svg>
<div class="b" style="left:1196px;top:258px;width:347px;height:77px;background:#fff;border:1px solid #e3e8f2;border-radius:5px;"></div>
<div class="b" style="left:1553px;top:258px;width:347px;height:77px;background:#fff;border:1px solid #e3e8f2;border-radius:5px;"></div>
<div class="b" style="left:1196px;top:345px;width:347px;height:93px;background:#fff;border:1px solid #e3e8f2;border-radius:5px;"></div>
<div class="b" style="left:1553px;top:345px;width:347px;height:93px;background:#fff;border:1px solid #e3e8f2;border-radius:5px;"></div>
<span class="t" style="left: 1206.3px; top: 272.01px; font-size: 18.4px; line-height: 18.4px; color: rgb(17, 28, 44); font-weight: 700; letter-spacing: -0.04px;">Status</span>
<div class="b" style="left:1206px;top:299px;width:83px;height:24.75px;background:#0b64dd;border-radius:3px;"></div>
<span class="t" style="left: 1217.5px; top: 304.01px; font-size: 15.4px; line-height: 15.4px; color: rgb(255, 255, 255); font-weight: 700; letter-spacing: -0.098px;">Open</span>
<svg class="i" style="left:1262.25px;top:304.25px;color:#fff;stroke-width:1.400;" width="15.5" height="15.5" viewBox="0 0 16 16" fill="none" stroke="currentColor" stroke-width="1" stroke-linecap="round" stroke-linejoin="round"><path d="M2.200 5.100 8 10.900 13.800 5.100"></path></svg>
<span class="t" style="left: 1563.7px; top: 272.01px; font-size: 18.4px; line-height: 18.4px; color: rgb(17, 28, 44); font-weight: 700; letter-spacing: -0.424px;">Risk score</span>
<span class="t" style="left: 1563.7px; top: 300.01px; font-size: 18.4px; line-height: 18.4px; color: rgb(29, 42, 62); letter-spacing: -0.112px;">73</span>
<span class="t" style="left: 1206.3px; top: 358.76px; font-size: 18.4px; line-height: 18.4px; color: rgb(17, 28, 44); font-weight: 700; letter-spacing: -0.235px;">Assignees</span>
<svg class="i" style="left:1210.75px;top:391.05px;color:#1750ba;" width="20.5" height="20.5" viewBox="0 0 16 16" fill="none" stroke="currentColor" stroke-width="1" stroke-linecap="round" stroke-linejoin="round"><circle cx="8" cy="8" r="6.5"></circle><path d="M8 4.6v6.8M4.6 8h6.8"></path></svg>
<span class="t" style="left: 1563.7px; top: 358.76px; font-size: 18.4px; line-height: 18.4px; color: rgb(17, 28, 44); font-weight: 700; letter-spacing: -0.024px;">Notes</span>
<svg class="i" style="left:1573.75px;top:396.05px;color:#1750ba;" width="20.5" height="20.5" viewBox="0 0 16 16" fill="none" stroke="currentColor" stroke-width="1" stroke-linecap="round" stroke-linejoin="round"><circle cx="8" cy="8" r="6.5"></circle><path d="M8 4.6v6.8M4.6 8h6.8"></path></svg>
<span class="t" style="left: 1605.7px; top: 398.01px; font-size: 18.4px; line-height: 18.4px; color: rgb(23, 80, 186); -webkit-text-stroke: 0.35px rgb(23, 80, 186); letter-spacing: 0.448px;">Add note</span>
<span class="t" style="left: 1256.2px; top: 474.01px; font-size: 20.6px; line-height: 20.6px; color: rgb(23, 80, 186); font-weight: 700; letter-spacing: 0.294px;">Overview</span>
<span class="t" style="left: 1522px; top: 474.01px; font-size: 20.6px; line-height: 20.6px; color: rgb(17, 28, 44); font-weight: 700; letter-spacing: 0.23px;">Table</span>
<span class="t" style="left: 1765.7px; top: 474.01px; font-size: 20.6px; line-height: 20.6px; color: rgb(17, 28, 44); font-weight: 700; letter-spacing: -0.313px;">JSON</span>
<div class="b" style="left:1176px;top:508px;width:744px;height:1px;background:#e9edf5;"></div>
<div class="b" style="left:1176px;top:508px;width:724px;height:1.5px;background:#e3e8f2;"></div>
<div class="b" style="left:1196px;top:507.5px;width:214px;height:2.5px;background:#0b64dd;"></div>
<svg class="i" style="left:1909.900px;top:513.800px" width="9" height="6" viewBox="0 0 9 6"><path d="M4.500 .8 8.300 5H.7z" fill="#a9b5c9"></path></svg>
<svg class="i" style="left:1909.800px;top:977.500px" width="9" height="6" viewBox="0 0 9 6"><path d="M4.500 5.200 8.300 1H.7z" fill="#a9b5c9"></path></svg>
<div class="b" style="left:1911.3px;top:524px;width:6.6px;height:172.3px;background:#a8b3c7;border-radius:4px;"></div>
<svg class="i" style="left:1201.75px;top:535.25px;color:#1d2a3e;" width="20.5" height="20.5" viewBox="0 0 16 16" fill="none" stroke="currentColor" stroke-width="1" stroke-linecap="round" stroke-linejoin="round"><path d="M2.200 5.100 8 10.900 13.800 5.100"></path></svg>
<span class="t" style="left: 1232.5px; top: 535.01px; font-size: 20.6px; line-height: 20.6px; color: rgb(17, 28, 44); font-weight: 700; letter-spacing: 0.007px;">About</span>
<span class="t" style="left: 1196.2px; top: 593.01px; font-size: 18.4px; line-height: 18.4px; color: rgb(17, 28, 44); font-weight: 700; letter-spacing: -0.2px;">Rule description</span>
<span class="t" style="left: 1677px; top: 593.01px; font-size: 18.4px; line-height: 18.4px; color: rgb(23, 80, 186); -webkit-text-stroke: 0.35px rgb(23, 80, 186); letter-spacing: 0.394px;">Show rule summary</span>
<svg class="i" style="left:1857.35px;top:591.65px;color:#1750ba;" width="20.5" height="20.5" viewBox="0 0 16 16" fill="none" stroke="currentColor" stroke-width="1" stroke-linecap="round" stroke-linejoin="round"><path d="M10.400 1.400h4.200v4.200M14.400 1.600 9.100 6.900M5.600 14.600H1.400v-4.200M1.600 14.400l5.300-5.300"></path></svg>
<span class="t" style="left: 1196px; top: 634.01px; font-size: 18.4px; line-height: 18.4px; color: rgb(29, 42, 62); letter-spacing: 0.379px;">This rule detects suspicious DNS activity by identifying DNS queries containing</span>
<span class="t" style="left: 1196px; top: 654.01px; font-size: 18.4px; line-height: 18.4px; color: rgb(29, 42, 62); letter-spacing: 0.3px;">unusual or repetitive subdomains. Such patterns are commonly used in DNS</span>
<span class="t" style="left: 1196px; top: 674.51px; font-size: 18.4px; line-height: 18.4px; color: rgb(29, 42, 62); letter-spacing: 0.488px;">tunneling attacks to covertly exfiltrate data through DNS traffic.</span>
<span class="t" style="left: 1196.2px; top: 716.01px; font-size: 18.4px; line-height: 18.4px; color: rgb(17, 28, 44); font-weight: 700; letter-spacing: -0.072px;">Alert reason</span>
<span class="t" style="left: 1704.5px; top: 716.01px; font-size: 18.4px; line-height: 18.4px; color: rgb(23, 80, 186); -webkit-text-stroke: 0.35px rgb(23, 80, 186); letter-spacing: 0.35px;">Show full reason</span>
<svg class="i" style="left:1857.35px;top:715.15px;color:#1750ba;" width="20.5" height="20.5" viewBox="0 0 16 16" fill="none" stroke="currentColor" stroke-width="1" stroke-linecap="round" stroke-linejoin="round"><path d="M10.400 1.400h4.200v4.200M14.400 1.600 9.100 6.900M5.600 14.600H1.400v-4.200M1.600 14.400l5.300-5.300"></path></svg>
<span class="t" style="left: 1196px; top: 756.76px; font-size: 18.4px; line-height: 18.4px; color: rgb(29, 42, 62); letter-spacing: 0.23px;">event with source 192.168.1.2 created high alert DNS Tunneling Detection.</span>
<div class="b" style="left:1196px;top:797.2px;width:691px;height:1.5px;background:#e3e8f2;"></div>
<svg class="i" style="left:1201.25px;top:824.75px;color:#1d2a3e;" width="20.5" height="20.5" viewBox="0 0 16 16" fill="none" stroke="currentColor" stroke-width="1" stroke-linecap="round" stroke-linejoin="round"><path d="M5.100 2.200 10.900 8 5.100 13.800"></path></svg>
<span class="t" style="left: 1232.5px; top: 825.01px; font-size: 20.6px; line-height: 20.6px; color: rgb(17, 28, 44); font-weight: 700; letter-spacing: 0.079px;">Investigation</span>
<div class="b" style="left:1196px;top:870.7px;width:691px;height:1.5px;background:#e3e8f2;"></div>
<svg class="i" style="left:1201.25px;top:897.75px;color:#1d2a3e;" width="20.5" height="20.5" viewBox="0 0 16 16" fill="none" stroke="currentColor" stroke-width="1" stroke-linecap="round" stroke-linejoin="round"><path d="M5.100 2.200 10.900 8 5.100 13.800"></path></svg>
<span class="t" style="left: 1232.5px; top: 898.01px; font-size: 20.6px; line-height: 20.6px; color: rgb(17, 28, 44); font-weight: 700; letter-spacing: 0.113px;">Visualizations</span>
<div class="b" style="left:1196px;top:944.2px;width:691px;height:1.5px;background:#e3e8f2;"></div>
<svg class="i" style="left:1201.25px;top:970.75px;color:#1d2a3e;" width="20.5" height="20.5" viewBox="0 0 16 16" fill="none" stroke="currentColor" stroke-width="1" stroke-linecap="round" stroke-linejoin="round"><path d="M2.200 5.100 8 10.900 13.800 5.100"></path></svg>
<span class="t" style="left: 1232.5px; top: 971.01px; font-size: 20.6px; line-height: 20.6px; color: rgb(17, 28, 44); font-weight: 700; letter-spacing: -0.06px;">Insights</span>
<div class="b" style="left:1176px;top:977px;width:730px;height:11px;background:linear-gradient(rgba(255,255,255,0),rgba(255,255,255,.8))"></div>
<div class="b" style="left:1176px;top:988px;width:744px;height:92px;background:#f6f9fc;"></div>
<svg class="i" style="left:1524.2px;top:1024px" width="19" height="22" viewBox="0 0 19 22"><path fill="#fec514" d="M.5 7.400A6.900 6.900 0 0 1 7.400.5V7.400z"></path><path fill="#00bfb3" d="M7.400 8.900H5.500A6 6 0 0 0 5.500 20.900H7.400z"></path><circle cx="14.200" cy="3.500" r="3.700" fill="#0b64dd"></circle><rect x="10.400" y="8.900" width="7.200" height="11.600" fill="#f04e98"></rect></svg>
<span class="t" style="left: 1554.3px; top: 1025.71px; font-size: 18.4px; line-height: 18.4px; color: rgb(23, 80, 186); -webkit-text-stroke: 0.35px rgb(23, 80, 186); letter-spacing: 0.507px;">Ask AI Assistant</span>
<div class="b" style="left:1740px;top:1009px;width:160px;height:51px;background:#0b64dd;border-radius:5px;"></div>
<span class="t" style="left: 1756px; top: 1025.71px; font-size: 18.4px; line-height: 18.4px; color: rgb(255, 255, 255); font-weight: 700; letter-spacing: -0.241px;">Take action</span>
<svg class="i" style="left:1864.05px;top:1024.25px;color:#fff;" width="20.5" height="20.5" viewBox="0 0 16 16" fill="none" stroke="currentColor" stroke-width="1" stroke-linecap="round" stroke-linejoin="round"><path d="M2.200 5.100 8 10.900 13.800 5.100"></path></svg>
</div>

</body></html>
